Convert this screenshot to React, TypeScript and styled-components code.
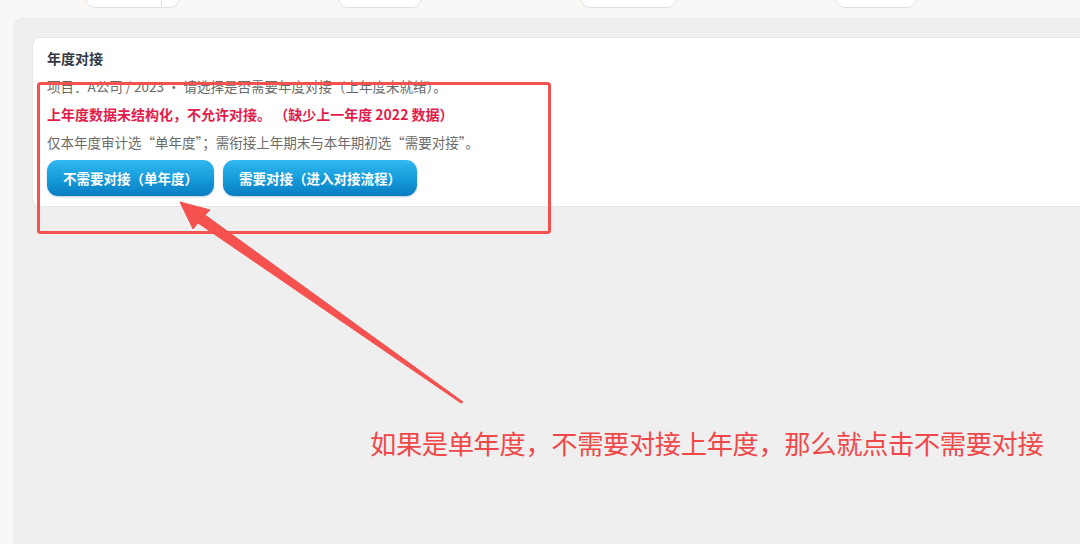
import React from 'react';
import styled, { createGlobalStyle } from 'styled-components';

const GlobalStyle = createGlobalStyle`
  html, body {
    margin: 0;
    padding: 0;
    background: #f9f8f6;
    font-family: "Noto Sans CJK SC", "Noto Sans", "Liberation Sans", sans-serif;
  }
`;

const Page = styled.div`
  position: relative;
  width: 1080px;
  height: 544px;
  overflow: hidden;
`;

const Toolbar = styled.div`
  display: flex;
  gap: 158px;
  height: 8px;
  padding-left: 85px;
  margin-bottom: 10px;
  overflow: visible;
`;

const ToolButton = styled.div<{ $w: number; $split?: number }>`
  position: relative;
  width: ${(p) => p.$w}px;
  height: 30px;
  margin-top: -22px;
  box-sizing: border-box;
  background: #fff;
  border: 1px solid #e2e0de;
  border-radius: 10px;

  &::after {
    content: '';
    display: ${(p) => (p.$split ? 'block' : 'none')};
    position: absolute;
    top: 0;
    bottom: 0;
    left: ${(p) => p.$split || 0}px;
    border-left: 1px solid #e2e0de;
  }
`;

const Panel = styled.div`
  margin-left: 13px;
  height: 526px;
  background: #efefef;
  border-top-left-radius: 10px;
  border-top: 1px solid #ebe9e7;
  padding: 18px 0 0 19px;
  box-sizing: border-box;
`;

const Card = styled.div`
  background: #fff;
  border: 1px solid #e7e7e7;
  border-right: none;
  border-radius: 8px 0 0 8px;
  padding: 10px 14px 10px;
  display: flex;
  flex-direction: column;
  gap: 8px;
`;

const Title = styled.div`
  font-size: 14px;
  font-weight: 700;
  line-height: 20px;
  color: #333a45;
`;

const Line = styled.div<{ $alert?: boolean }>`
  font-size: ${(p) => (p.$alert ? '14px' : '13.5px')};
  font-weight: ${(p) => (p.$alert ? 700 : 400)};
  line-height: 20px;
  color: ${(p) => (p.$alert ? '#e21d4c' : '#6b6b6b')};
  white-space: nowrap;
`;

const Actions = styled.div`
  display: flex;
  gap: 9px;
`;

const Action = styled.button`
  height: 36px;
  padding: 0 16px;
  border: none;
  border-radius: 11px;
  background: linear-gradient(to bottom, #30b8f0 0%, #159ad9 55%, #0a7dc2 100%);
  box-shadow: 0 1px 2px rgba(0, 60, 110, 0.25);
  color: #fff;
  font-family: inherit;
  font-size: 13.5px;
  font-weight: 700;
  cursor: pointer;
`;

const Overlay = styled.svg`
  position: absolute;
  left: 0;
  top: 0;
  pointer-events: none;
`;

const Note = styled.div`
  position: absolute;
  left: 370px;
  top: 428px;
  font-size: 26.3px;
  letter-spacing: -0.4px;
  line-height: 30px;
  color: #f04848;
  white-space: nowrap;
`;

export default function App() {
  return (
    <Page>
      <GlobalStyle />
      <Toolbar>
        <ToolButton $w={95} $split={75} />
        <ToolButton $w={84} />
        <ToolButton $w={97} />
        <ToolButton $w={82} />
      </Toolbar>
      <Panel>
        <Card>
          <Title>年度对接</Title>
          <Line>项目：A公司 / 2023 · 请选择是否需要年度对接（上年度未就绪）。</Line>
          <Line $alert>上年度数据未结构化，不允许对接。 （缺少上一年度 2022 数据）</Line>
          <Line>仅本年度审计选“单年度”；需衔接上年期末与本年期初选“需要对接”。</Line>
          <Actions>
            <Action>不需要对接（单年度）</Action>
            <Action>需要对接（进入对接流程）</Action>
          </Actions>
        </Card>
      </Panel>

      <Overlay width="1080" height="544" viewBox="0 0 1080 544">
        <rect x="38.5" y="83.5" width="511" height="149" rx="2" fill="none" stroke="#f4514f" strokeWidth="3" />
        <polygon
          points="180,202 210,210 205,215 463,402 461,403 198,223 193,229"
          fill="#f4514f"
          stroke="#f4514f"
          strokeWidth="1"
          strokeLinejoin="round"
        />
      </Overlay>
      <Note>如果是单年度，不需要对接上年度，那么就点击不需要对接</Note>
    </Page>
  );
}
